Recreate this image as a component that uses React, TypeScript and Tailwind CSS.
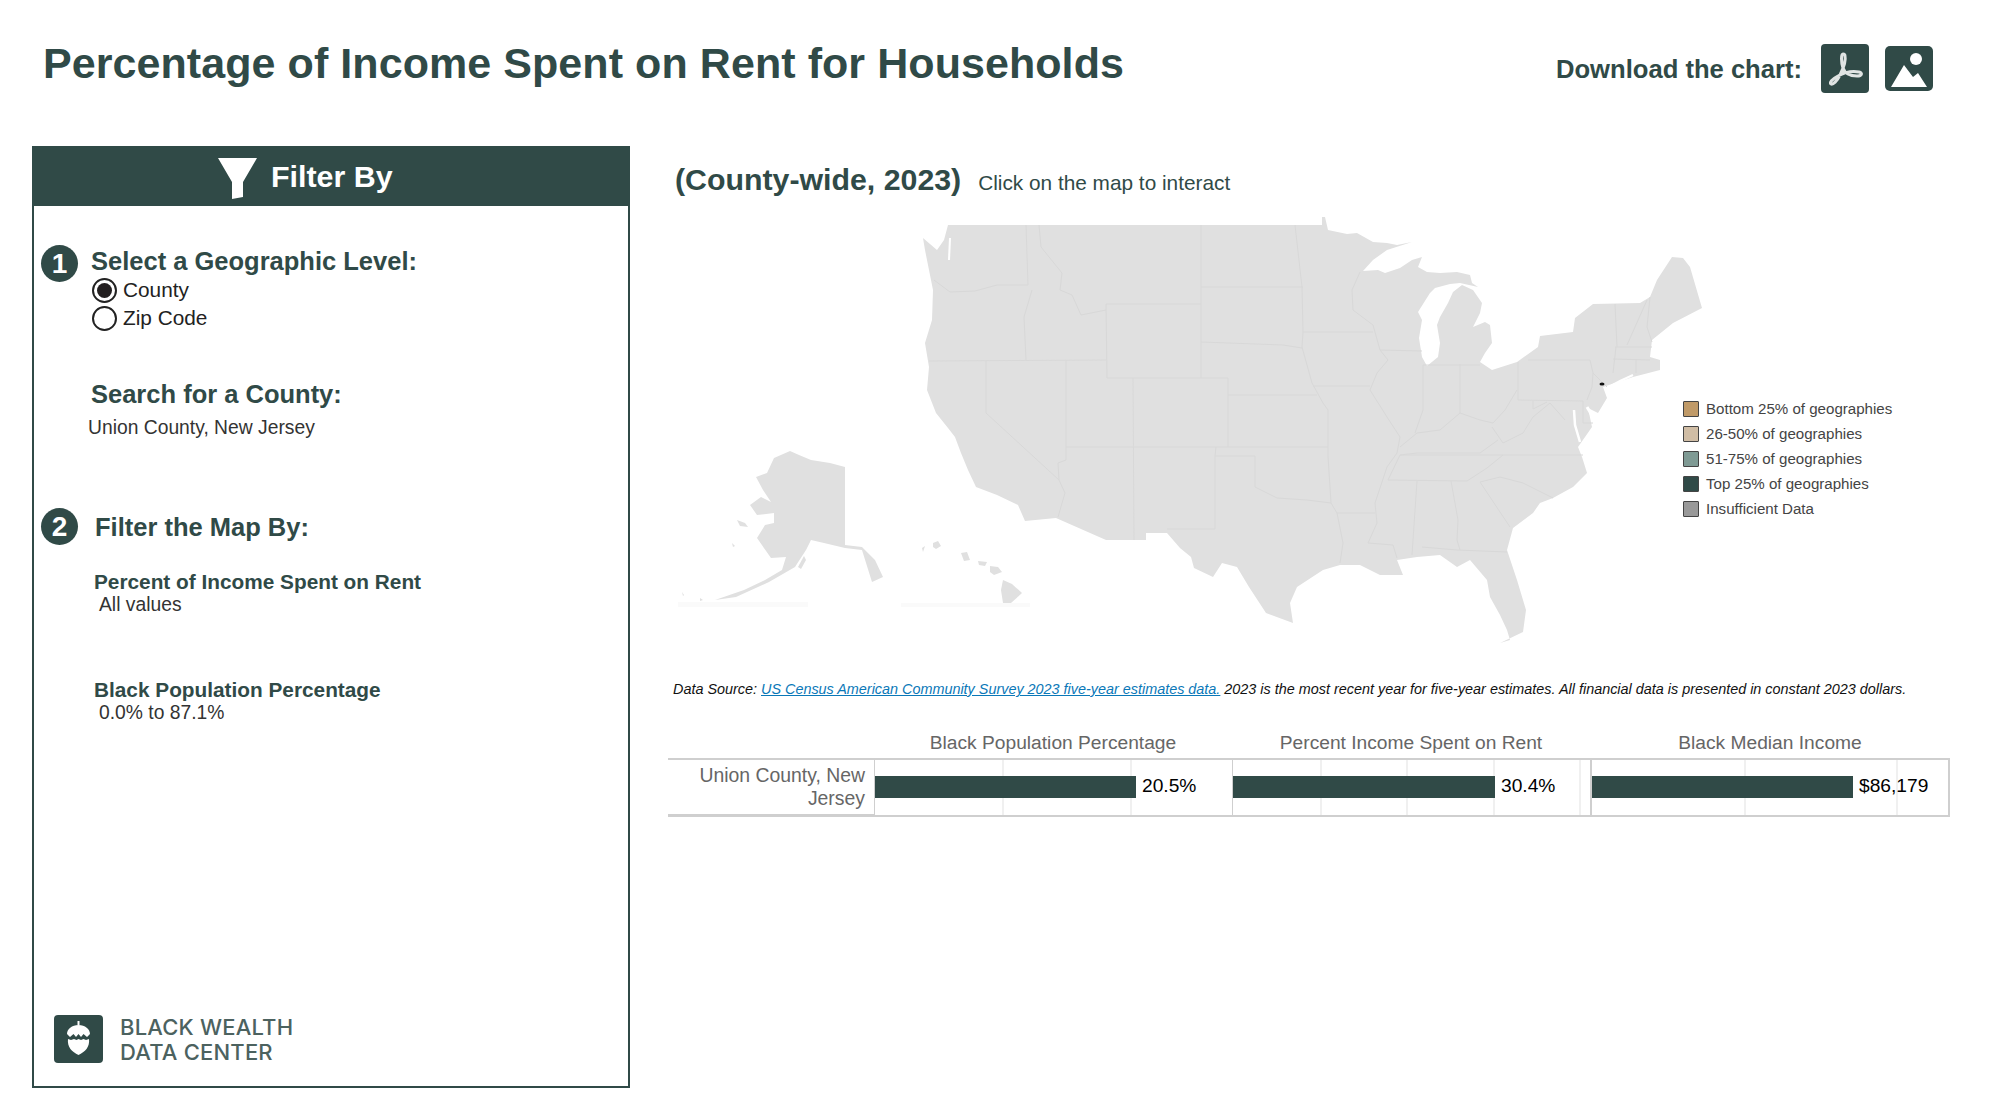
const GREEN = "#304a47";

const US_OUTLINE =
  "M948 225L944 240L937 250L923 238L925 250L929 270L933 290L932 320L925 343L929 367L927 390L936 413L948 428L955 437L961 453L968 470L976 487L997 495L1018 505L1025 521L1056 518L1106 540L1146 540L1146 533L1167 533L1180 548L1191 557L1194 568L1213 577L1222 563L1237 567L1249 587L1266 613L1293 623L1290 603L1297 587L1323 570L1340 565L1360 565L1380 575L1403 575L1397 560L1417 557L1440 555L1457 567L1470 560L1487 580L1490 597L1500 615L1507 630L1510 640L1500 643L1523 632L1526 610L1517 580L1507 550L1513 528L1533 513L1540 503L1553 498L1573 487L1587 473L1582 457L1578 447L1592 427L1588 408L1598 413L1607 398L1603 387L1633 377L1660 370L1660 360L1650 357L1652 340L1673 323L1702 308L1690 267L1683 258L1672 257L1657 280L1650 297L1640 303L1593 304L1575 318L1573 332L1540 336L1538 347L1517 362L1492 370L1480 362L1485 353L1492 343L1490 325L1485 322L1473 327L1480 313L1482 303L1473 290L1462 285L1453 292L1448 303L1440 317L1437 325L1440 343L1438 357L1427 366L1422 357L1419 338L1422 320L1418 312L1430 293L1435 288L1450 284L1460 283L1478 287L1472 283L1470 275L1457 272L1440 273L1427 272L1418 267L1422 257L1412 260L1400 268L1385 273L1378 270L1363 271L1373 260L1387 250L1412 242L1397 245L1387 243L1373 242L1357 233L1347 234L1328 230L1325 217L1322 217L1322 225Z";

const ALASKA =
  "M790 451L774 458L767 473L756 477L763 490L771 502L761 497L750 505L757 515L774 513L774 523L765 525L757 538L771 558L786 557L782 570L765 580L744 590L715 600L736 597L769 582L795 567L806 550L811 540L824 543L845 548L862 550L872 582L883 577L875 560L862 547L845 545L845 467L830 463L811 460L799 455Z";

const ALASKA_ISLANDS = [
  "M798 567L804 556L806 560L801 569Z",
  "M737 520L745 523L748 527L740 526Z",
  "M732 543L735 546L733 547Z",
  "M682 592L684 595L683 596Z",
  "M700 598L703 600L700 601Z",
];

const HAWAII = [
  "M1003 580L1012 584L1022 593L1011 603L1003 603L1001 590Z",
  "M978 561L987 562L985 566L979 565Z",
  "M990 566L998 567L1002 572L994 575L990 572Z",
  "M961 553L967 552L970 560L964 561Z",
  "M933 543L938 541L941 546L936 549L933 547Z",
  "M922 548L925 546L923 552Z",
];

const STATE_LINES = [
  "M1026 225L1028 285",
  "M934 280L950 292L975 291L997 285L1028 285",
  "M1032 290L1024 317L1026 360",
  "M929 361L1106 360",
  "M1039 225L1041 247L1062 273L1060 290L1072 295L1081 315L1106 310",
  "M1106 304L1201 304",
  "M1201 225L1201 378",
  "M1106 304L1107 378L1228 378",
  "M1066 360L1066 460",
  "M1133 378L1134 540",
  "M1228 378L1228 447",
  "M1066 447L1328 447",
  "M986 361L986 413L1059 480",
  "M1066 460L1058 463L1059 480L1065 493L1058 517",
  "M1216 447L1215 456L1215 529L1167 529",
  "M1215 456L1255 456L1255 487L1277 498L1307 500L1331 503",
  "M1328 456L1331 503",
  "M1201 287L1303 287",
  "M1201 342L1283 345L1302 348",
  "M1228 395L1317 395",
  "M1295 225L1302 287L1303 332L1302 347L1312 383L1323 403L1328 410L1328 456",
  "M1303 332L1373 332",
  "M1360 272L1352 290L1353 310L1373 325L1380 350L1388 360L1377 373L1370 390L1387 417L1400 437L1397 453L1387 467L1375 503L1377 523L1368 543",
  "M1380 350L1422 351",
  "M1313 386L1370 386",
  "M1423 365L1423 410L1415 433",
  "M1460 364L1460 413",
  "M1423 365L1480 365",
  "M1400 447L1417 433L1440 430L1460 413L1480 420L1493 423L1505 410L1517 390",
  "M1518 362L1518 400",
  "M1528 360L1590 360L1593 373L1592 387L1587 400",
  "M1518 400L1583 401L1583 423L1593 423",
  "M1593 373L1607 387",
  "M1492 427L1503 443L1523 433L1533 417L1550 403L1565 420",
  "M1533 401L1533 409L1547 402",
  "M1388 480L1400 455L1417 453L1480 453L1498 440",
  "M1400 455L1583 455",
  "M1503 455L1487 468L1467 481",
  "M1388 480L1467 481",
  "M1417 481L1412 555",
  "M1451 481L1458 520L1457 540L1460 550",
  "M1422 547L1457 550L1507 552",
  "M1480 482L1500 477L1523 483L1553 498",
  "M1480 482L1510 527",
  "M1337 513L1375 513",
  "M1331 503L1337 513L1343 543L1340 563",
  "M1368 543L1393 545L1397 558",
  "M1615 304L1617 347",
  "M1647 300L1627 345",
  "M1650 297L1647 327L1652 342",
  "M1615 347L1652 347",
  "M1613 359L1650 360",
  "M1616 347L1613 373",
  "M1636 359L1636 373",
];

function USMap() {
  return (
    <svg viewBox="660 210 1020 450" width="1020" height="450" className="shrink-0 overflow-visible">
      <rect x="678" y="602" width="130" height="5" fill="#fafafa" />
      <rect x="901" y="603" width="129" height="4" fill="#fafafa" />
      <path d={US_OUTLINE} fill="#e0e0e0" />
      <path d="M950 238L949 260" fill="none" stroke="#fff" strokeWidth="2" />
      <path d="M1607 388L1620 381L1633 375" fill="none" stroke="#fff" strokeWidth="2" />
      <path d="M1574 410L1575 425L1580 442" fill="none" stroke="#fff" strokeWidth="2.5" />
      <path d="M1587 407L1593 417" fill="none" stroke="#fff" strokeWidth="3" />
      <path d={ALASKA} fill="#e0e0e0" />
      {ALASKA_ISLANDS.concat(HAWAII).map((d) => (
        <path key={d} d={d} fill="#e0e0e0" />
      ))}
      {STATE_LINES.map((d) => (
        <path key={d} d={d} fill="none" stroke="#d8d8d8" strokeWidth="1" />
      ))}
      <ellipse cx="1602" cy="384" rx="2.5" ry="1.6" fill="#111" />
    </svg>
  );
}

const LEGEND = [
  { label: "Bottom 25% of geographies", color: "bg-[#c09a68]" },
  { label: "26-50% of geographies", color: "bg-[#d0bda5]" },
  { label: "51-75% of geographies", color: "bg-[#7f9a94]" },
  { label: "Top 25% of geographies", color: "bg-[#304a47]" },
  { label: "Insufficient Data", color: "bg-[#999999]" },
];

const BARS = [
  { title: "Black Population Percentage", value: "20.5%", width: "w-[358px]", grid: [127, 255], barW: "w-[261px]", edge: "border-l" },
  { title: "Percent Income Spent on Rent", value: "30.4%", width: "w-[358px]", grid: [87, 173, 260, 346], barW: "w-[262px]", edge: "border-l" },
  { title: "Black Median Income", value: "$86,179", width: "w-[360px]", grid: [152, 304], barW: "w-[261px]", edge: "border-l-2 border-r-2" },
];

function NumberBadge({ n }: { n: string }) {
  return (
    <div className="w-[37px] h-[37px] rounded-full bg-[#304a47] text-white flex items-center justify-center text-[28px] font-bold shrink-0">
      {n}
    </div>
  );
}

function Radio({ label, checked }: { label: string; checked?: boolean }) {
  return (
    <div className="flex items-center h-[28px] gap-[6px] text-[20.8px] text-[#222]">
      <span className="w-[25px] h-[25px] rounded-full border-2 border-[#222] flex items-center justify-center">
        {checked && <span className="w-[15px] h-[15px] rounded-full bg-[#231f20]" />}
      </span>
      {label}
    </div>
  );
}

function FilterValue({ title, value }: { title: string; value: string }) {
  return (
    <div className="ml-[60px]">
      <div className="text-[20.8px] leading-[25px] font-bold text-[#304a47]">{title}</div>
      <div className="ml-[5px] text-[19.3px] leading-[21px] text-[#333]">{value}</div>
    </div>
  );
}

function Sidebar() {
  return (
    <aside className="w-[598px] h-[942px] border-2 border-[#304a47] flex flex-col shrink-0">
      <div className="h-[58px] pl-[184px] bg-[#304a47] flex items-center gap-[13px] text-white text-[30.4px] font-bold shrink-0">
        <svg width="40" height="42" viewBox="0 0 40 42" className="mt-[4px]">
          <path d="M0 0H39L25 24V39L14 41V24Z" fill="#fff" />
        </svg>
        <span>Filter By</span>
      </div>

      <div className="flex items-start pl-[7px] pt-[39px] gap-[13px]">
        <NumberBadge n="1" />
        <div>
          <h2 className="text-[25.5px] leading-[32px] font-bold text-[#304a47]">Select a Geographic Level:</h2>
          <div className="-mt-[1px] ml-[1px]">
            <Radio label="County" checked />
            <Radio label="Zip Code" />
          </div>
        </div>
      </div>

      <h2 className="ml-[57px] mt-[46px] text-[25.5px] leading-[32px] font-bold text-[#304a47]">Search for a County:</h2>
      <div className="ml-[54px] mt-[5px] text-[19.3px] leading-[26px] text-[#333]">Union County, New Jersey</div>

      <div className="flex items-center pl-[7px] mt-[67px] gap-[17px]">
        <NumberBadge n="2" />
        <h2 className="text-[25.5px] leading-[32px] font-bold text-[#304a47]">Filter the Map By:</h2>
      </div>

      <div className="mt-[24px]">
        <FilterValue title="Percent of Income Spent on Rent" value="All values" />
      </div>
      <div className="mt-[62px]">
        <FilterValue title="Black Population Percentage" value="0.0% to 87.1%" />
      </div>

      <div className="mt-auto mb-[21px] ml-[20px] flex items-center gap-[17px]">
        <svg width="49" height="48" viewBox="0 0 49 48" className="shrink-0">
          <rect width="49" height="48" rx="4" fill={GREEN} />
          <path d="M24.500 6v4" stroke="#fff" strokeWidth="2" />
          <path d="M13 19c0-5 5-9 11.500-9S36 14 36 19l-3 3-3.500-3-2.500 3-2.500-3-2.500 3-2.500-3-3.500 3Z" fill="#fff" />
          <path d="M14 24l3 1 3-1 2.500 1 2-1 2.500 1 2.500-1 2.500 1 3-1c1 8-4 13-10.500 16C18 37 13 32 14 24Z" fill="#fff" />
        </svg>
        <div className="mt-[2px] font-['Inter',sans-serif] font-medium text-[22px] leading-[25px] text-[#4c625f] tracking-[0.2px]">
          BLACK WEALTH
          <br />
          DATA CENTER
        </div>
      </div>
    </aside>
  );
}

function ComparisonTable() {
  return (
    <div className="ml-[8px] mt-[31px]">
      <div className="flex h-[28px] text-[19.2px] leading-[25px] text-[#666]">
        <div className="w-[206px]" />
        {BARS.map((b) => (
          <div key={b.title} className={`${b.width} text-center`}>
            {b.title}
          </div>
        ))}
      </div>
      <div className="flex h-[59px] w-[1282px] border-t-2 border-[#cfcfcf]">
        <div className="w-[206px] h-full border-b-[3px] border-[#cfcfcf] flex items-center justify-end pr-[9px] text-right text-[19.4px] leading-[23px] text-[#666]">
          <span className="w-[180px]">Union County, New Jersey</span>
        </div>
        {BARS.map((b) => (
          <div
            key={b.title}
            className={`${b.width} ${b.edge} relative h-full border-b-2 border-[#cfcfcf] flex items-center pb-[2px]`}
          >
            {b.grid.map((x) => (
              <div key={x} className="absolute top-0 bottom-0 w-[2px] bg-[#f0f0f0]" style={{ left: x }} />
            ))}
            <div className={`${b.barW} relative h-[22px] bg-[#304a47]`} />
            <span className="relative ml-[6px] text-[19.2px] text-black">{b.value}</span>
          </div>
        ))}
      </div>
    </div>
  );
}

export default function App() {
  return (
    <div className="w-[1989px] h-[1118px] bg-white overflow-hidden font-['Liberation_Sans',Arial,sans-serif]">
      <header className="h-[146px] flex justify-between items-start">
        <h1 className="ml-[43px] mt-[37px] text-[43px] leading-[52px] font-bold text-[#304a47] tracking-[0.07px]">
          Percentage of Income Spent on Rent for Households
        </h1>
        <div className="mt-[44px] mr-[56px] flex items-start">
          <span className="mt-[10px] text-[25.6px] leading-[30px] font-bold text-[#304a47]">Download the chart:</span>
          <svg width="48" height="49" viewBox="0 0 48 49" className="ml-[19px]">
            <rect width="48" height="49" rx="4" fill={GREEN} />
            <path
              d="M22 10c-2 0-2 8 0 14s8 8 14 8c5 0 6-3 2-4-6-1-14 0-21 4-6 3-9 7-7 8 2 1 6-3 9-9 3-6 6-15 5-19 0-2-1-2-2-2Z"
              fill="none"
              stroke="#fff"
              strokeWidth="3"
              opacity="0.85"
            />
          </svg>
          <svg width="48" height="45" viewBox="0 0 48 45" className="ml-[16px] mt-[2px]">
            <rect width="48" height="45" rx="5" fill={GREEN} />
            <circle cx="31" cy="13" r="6" fill="#fff" />
            <path d="M6 41L19 19L28 31L33 27L42 41Z" fill="#fff" />
          </svg>
        </div>
      </header>

      <main className="flex pl-[32px]">
        <Sidebar />
        <section className="ml-[30px] flex-1 min-w-0">
          <div className="mt-[14px] ml-[15px] h-[40px] flex items-center gap-[17px]">
            <span className="text-[30.3px] font-bold text-[#304a47]">(County-wide, 2023)</span>
            <span className="text-[20.8px] mt-[5px] text-[#304a47]">Click on the map to interact</span>
          </div>
          <div className="mt-[10px] flex items-start">
            <USMap />
            <ul className="mt-[191px] ml-[3px] flex flex-col gap-[9px]">
              {LEGEND.map((l) => (
                <li key={l.label} className="flex items-center h-[16px] gap-[7px] text-[15.1px] text-[#444]">
                  <span className={`w-[16px] h-[16px] rounded-[1px] border border-[#444] ${l.color}`} />
                  <span className="whitespace-nowrap">{l.label}</span>
                </li>
              ))}
            </ul>
          </div>
          <p className="ml-[13px] mt-[19px] text-[14.4px] leading-[20px] italic text-[#111] whitespace-nowrap">
            Data Source:{" "}
            <a className="text-[#0a78b8] underline" href="#">
              US Census American Community Survey 2023 five-year estimates data.
            </a>{" "}
            2023 is the most recent year for five-year estimates. All financial data is presented in constant 2023 dollars.
          </p>
          <ComparisonTable />
        </section>
      </main>
    </div>
  );
}
